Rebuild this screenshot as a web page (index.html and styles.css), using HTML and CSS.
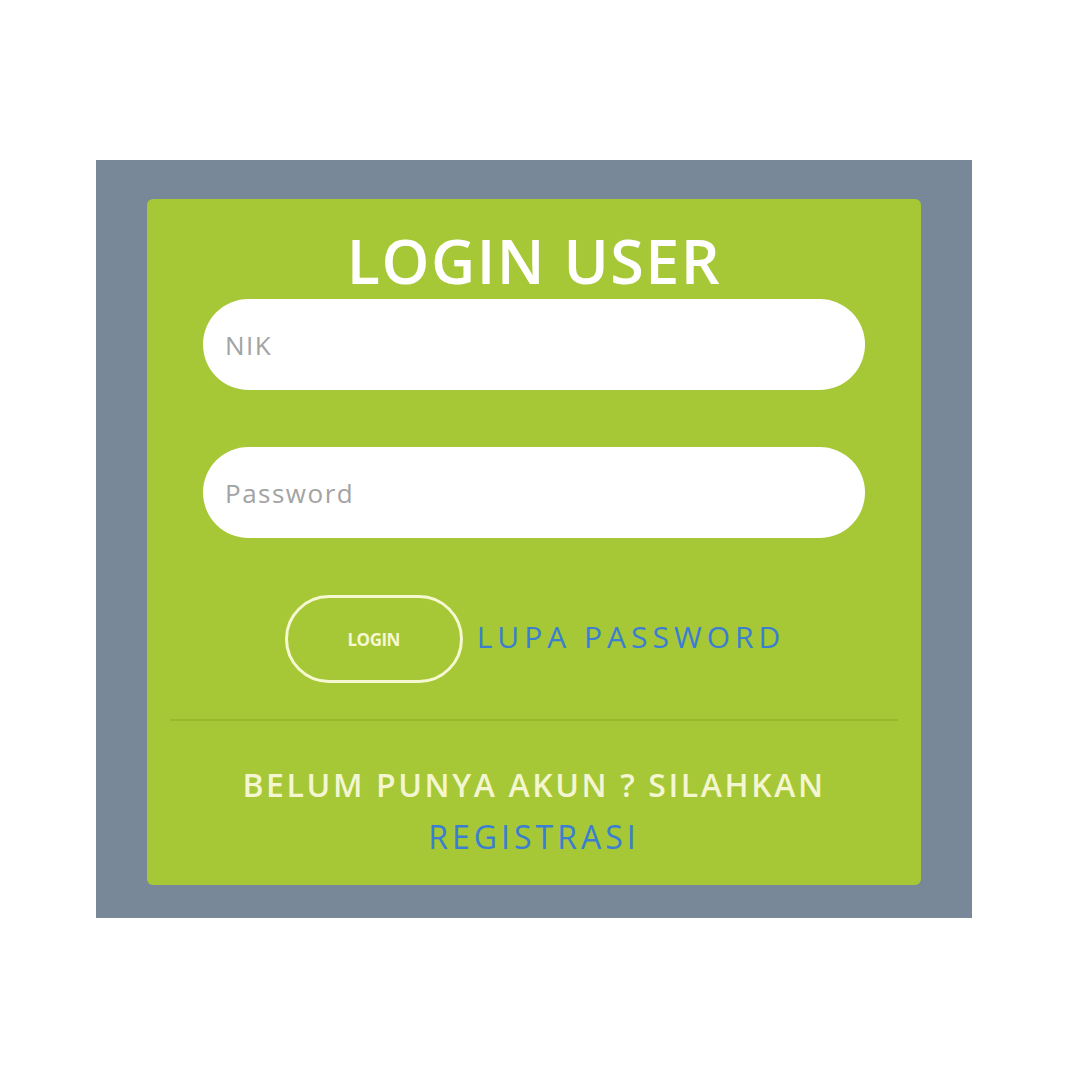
FILE: index.html
```html
<!DOCTYPE html>
<html lang="id">
<head>
    <meta charset="UTF-8">
    <meta name="viewport" content="width=device-width, initial-scale=1.0">
    <title>Login User</title>
    <link rel="stylesheet" href="styles.css">
</head>
<body>

    <div class="wrapper">
        <div class="login-box">
            <h1 class="title">LOGIN USER</h1>

            <form class="login-form">
                <input type="text" class="field" placeholder="NIK">
                <input type="password" class="field" placeholder="Password">

                <div class="actions">
                    <button type="button" class="login-btn">LOGIN</button>
                    <a href="#" class="link forgot">LUPA PASSWORD</a>
                </div>
            </form>

            <hr class="divider">

            <p class="register">
                BELUM PUNYA AKUN ? SILAHKAN<br>
                <a href="#" class="link">REGISTRASI</a>
            </p>
        </div>
    </div>

</body>
</html>
```

FILE: styles.css
```css
* {
    margin: 0;
    padding: 0;
    box-sizing: border-box;
    font-family: "Open Sans", "Liberation Sans", sans-serif;
}

body {
    background: #ffffff;
    padding: 160px 0 0 96px;
}

.wrapper {
    width: 876px;
    height: 758px;
    background: #788898;
    padding: 39px 51px 33px 51px;
}

.login-box {
    background: #a6c736;
    border-radius: 6px;
    height: 686px;
    padding: 24px 56px 0 56px;
    text-align: center;
}

.title {
    color: #ffffff;
    font-size: 61px;
    font-weight: 600;
    line-height: 76px;
    letter-spacing: 1.5px;
}

.login-form {
    display: flex;
    flex-direction: column;
    gap: 57px;
}

.field {
    width: 100%;
    height: 91px;
    border: none;
    border-radius: 46px;
    background: #ffffff;
    padding: 0 22px;
    font-size: 26px;
    letter-spacing: 1.5px;
    color: #555;
    outline: none;
}

.field::placeholder {
    color: #a3a3a3;
}

.actions {
    display: flex;
    justify-content: center;
    align-items: center;
    gap: 14px;
    margin-left: 2px;
}

.login-btn {
    width: 178px;
    height: 88px;
    border: 3px solid #f6f8d2;
    border-radius: 44px;
    background: transparent;
    color: #f6f8d2;
    font-size: 17px;
    font-weight: 700;
    letter-spacing: -0.5px;
}

.link {
    color: #3a7ed2;
    text-decoration: none;
}

.forgot {
    font-size: 30px;
    letter-spacing: 5px;
    margin-bottom: 6px;
}

.divider {
    border: none;
    border-top: 2px solid #99b92c;
    margin: 36px -33px 0 -33px;
}

.register {
    margin-top: 38px;
    color: #f3f6d0;
    font-size: 32px;
    font-weight: 600;
    line-height: 52px;
    letter-spacing: 2.6px;
}

.register .link {
    font-weight: 400;
    letter-spacing: 4px;
}
```
